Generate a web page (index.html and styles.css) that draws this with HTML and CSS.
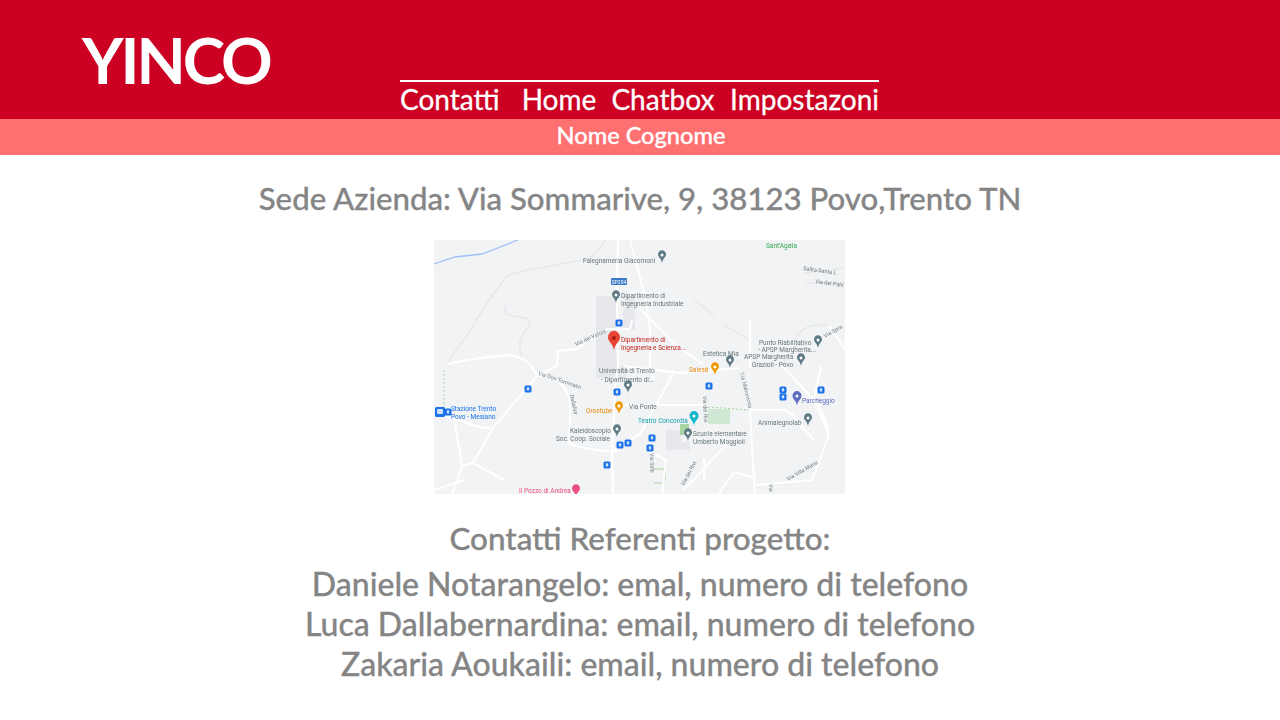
FILE: index.html
```html
<!DOCTYPE html>
<html>
<head>
<meta charset="UTF-8">
<title>YINCO - Contatti</title>
<link rel="stylesheet" href="styles.css">
</head>
<body>
  <header class="top">
    <div class="logo">YINCO</div>
    <nav class="menu">
      <a class="menu-contatti">Contatti</a>
      <a class="menu-home">Home</a>
      <a class="menu-chatbox">Chatbox</a>
      <a>Impostazoni</a>
    </nav>
  </header>
  <div class="user">Nome Cognome</div>
  <main class="content">
    <h1 class="address">Sede Azienda: Via Sommarive, 9, 38123 Povo,Trento TN</h1>
    <svg class="map" width="411" height="254" viewBox="0 0 411 254">
      <defs>
        <path id="pin" d="M0 5C-1-1-5-2-5-5.500A5 5.500 0 0 1 5-5.500C5-2 1-1 0 5Z"/>
        <g id="stop">
          <rect x="-3.500" y="-3.500" width="7" height="7" rx="1.500" fill="#1a73e8"/>
          <rect x="-1.200" y="-1.800" width="2.400" height="3.200" rx=".6" fill="#cfe0fb"/>
        </g>
      </defs>
      <rect width="411" height="254" fill="#f1f3f4"/>
      <!-- buildings and parks -->
      <rect x="162" y="56" width="21" height="70" fill="#e6e8eb"/>
      <rect x="189" y="56" width="12" height="34" fill="#e6e8eb"/>
      <rect x="162" y="126" width="30" height="12" fill="#e6e8eb"/>
      <path d="M232 190h16v12h8v8h-24Z" fill="#e6e8eb"/>
      <rect x="274" y="169" width="22" height="15" fill="#cfe8d4"/>
      <rect x="246" y="184" width="9" height="11" fill="#a8d5a2"/>
      <path d="M219 229h12v10q0 4-4 4h-7" fill="none" stroke="#a8d5a2"/>
      <path d="M274 167l42 3" stroke="#a8d5a2" stroke-dasharray="2 2" fill="none"/>
      <path d="M10 130v42" stroke="#a8d5a2" stroke-dasharray="2 2" fill="none"/>
      <path d="M0 24L21 17L48 14L84 0" fill="none" stroke="#9fc2f5" stroke-width="1.300"/>
      <!-- faint roads -->
      <g class="road-thin">
        <path d="M13 126Q22 108 33 96Q52 62 73 36Q88 30 106 28L153 19Q165 12 171 0"/>
        <path d="M71 66V72Q72 75 80 76L94 79Q98 82 92 90Q84 100 86 108L88 119"/>
        <path d="M370 33L410 28M372 43H410"/>
        <path d="M260 60L280 75M290 85L316 100"/>
        <path d="M360 100Q370 82 395 85M350 126Q352 105 370 105"/>
      </g>
      <!-- roads -->
      <g class="road">
        <path d="M184 0Q182 60 184 126L181 149L178 213L179 254"/>
        <path d="M196 0L212 60L216 90M216 90V130L220 140"/>
        <path d="M123 126L124 111L143 109L173 89L196 89L198 80"/>
        <path d="M13 124Q40 118 73 115Q88 116 96 124L103 136L123 126"/>
        <path d="M206 69L243 106L269 124"/>
        <path d="M190 126L246 133L306 128"/>
        <path d="M9 176L36 184Q50 189 59 188L103 136Q118 137 126 143Q134 150 136 163V189Q133 198 136 204Q150 209 173 211H186"/>
        <path d="M59 188L39 223L28 226L21 183"/>
        <path d="M28 226L18 254M39 223L70 240M0 250L30 240"/>
        <path d="M239 134L206 194L180 210"/>
        <path d="M188 165H270"/>
        <path d="M308 133L316 169L319 226L321 254"/>
        <path d="M316 80V128M316 170H350Q358 172 362 180L380 200"/>
        <path d="M348 126L385 165L395 190M387 126L380 160L395 195L378 240L322 245"/>
        <path d="M395 85L411 110M270 195H290L292 205L250 250M322 238L300 232L285 254"/>
        <path d="M216 212L232 220L228 254M270 218V240"/>
      </g>
      <!-- map labels -->
      <g class="label">
        <text class="green" x="332" y="8">Sant'Agata</text>
        <text x="149" y="23">Falegnameria Giacomoni</text>
        <text x="187" y="58">Dipartimento di</text>
        <text x="187" y="66">Ingegneria Industriale</text>
        <text class="red" x="187" y="102">Dipartimento di</text>
        <text class="red" x="187" y="110">Ingegneria e Scienza...</text>
        <text x="325" y="105">Punto Riabilitativo</text>
        <text x="324" y="112">- APSP Margherita...</text>
        <text x="310" y="119">APSP Margherita</text>
        <text x="318" y="127">Grazioli - Povo</text>
        <text x="269" y="116">Estetica Mia</text>
        <text class="orange" x="255" y="132">Salesà</text>
        <text x="165" y="133">Università di Trento</text>
        <text x="167" y="142">- Dipartimento di...</text>
        <text class="orange" x="152" y="173">Orostube</text>
        <text x="195" y="169">Via Ponte</text>
        <text class="blue" x="17" y="171">Stazione Trento</text>
        <text class="blue" x="17" y="179">Povo - Mesiano</text>
        <text x="136" y="193">Kaleidoscopio</text>
        <text x="122" y="201">Soc. Coop. Sociale</text>
        <text class="teal" x="204" y="183">Teatro Concordia</text>
        <text x="259" y="196">Scuola elementare</text>
        <text x="259" y="204">Umberto Moggioli</text>
        <text class="purple" x="368" y="163">Parcheggio</text>
        <text x="324" y="185">Animalegnolab</text>
        <text class="pink" x="85" y="253">Il Pozzo di Andrea</text>
        <text class="small" transform="translate(142 106) rotate(-24)">Via dei Valoni</text>
        <text class="small" transform="translate(369 30) rotate(8)">Salita Santa L</text>
        <text class="small" transform="translate(381 43) rotate(8)">Via dei Pahl</text>
        <text class="small" transform="translate(391 98) rotate(-30)">Via Spra</text>
        <text class="small" transform="translate(354 241) rotate(-30)">Via Villa Maria</text>
        <text class="small" transform="translate(104 135) rotate(18)">Via Don Tommaso</text>
        <text class="small" transform="translate(136 155) rotate(78)">Dallafior</text>
        <text class="small" transform="translate(269 156) rotate(88)">Via dei Rivi</text>
        <text class="small" transform="translate(250 246) rotate(-62)">Via dei Rivi</text>
        <text class="small" transform="translate(216 213) rotate(88)">Via Sale</text>
        <text class="small" transform="translate(306 133) rotate(76)">Via Mahoniosa</text>
        <text class="small" transform="translate(335 244) rotate(88)">Via</text>
      </g>
      <!-- sp badge -->
      <rect x="177" y="38" width="16" height="7" rx="1" fill="#3b78c9"/>
      <text class="badge" x="185" y="43.500" text-anchor="middle">SP204</text>
      <!-- pins -->
      <g fill="#5f7a85">
        <use href="#pin" transform="translate(228 19) scale(.8)"/>
        <use href="#pin" transform="translate(182 59) scale(.8)"/>
        <use href="#pin" transform="translate(384 104) scale(.8)"/>
        <use href="#pin" transform="translate(367 122) scale(.8)"/>
        <use href="#pin" transform="translate(296 124) scale(.8)"/>
        <use href="#pin" transform="translate(194 149) scale(.8)"/>
        <use href="#pin" transform="translate(183 193) scale(.8)"/>
        <use href="#pin" transform="translate(254 197) scale(.8)"/>
        <use href="#pin" transform="translate(374 182) scale(.8)"/>
      </g>
      <g fill="#ea4335"><use href="#pin" transform="translate(180 104) scale(1.200)"/></g>
      <circle cx="180" cy="98" r="2" fill="#a61c14"/>
      <g fill="#f29900">
        <use href="#pin" transform="translate(281 131) scale(.8)"/>
        <use href="#pin" transform="translate(185 170) scale(.8)"/>
      </g>
      <g fill="#12b5cb"><use href="#pin" transform="translate(260 181) scale(.9)"/></g>
      <g fill="#5c6bc0"><use href="#pin" transform="translate(363 161) scale(.9)"/></g>
      <g fill="#ec4f82"><use href="#pin" transform="translate(142 253) scale(.8)"/></g>
      <g fill="#fff">
        <circle cx="228" cy="15" r="1.500"/><circle cx="182" cy="55" r="1.500"/>
        <circle cx="384" cy="100" r="1.500"/><circle cx="367" cy="118" r="1.500"/>
        <circle cx="296" cy="120" r="1.500"/><circle cx="194" cy="145" r="1.500"/>
        <circle cx="183" cy="189" r="1.500"/><circle cx="254" cy="193" r="1.500"/>
        <circle cx="374" cy="178" r="1.500"/><circle cx="281" cy="127" r="1.500"/>
        <circle cx="185" cy="166" r="1.500"/><circle cx="260" cy="176" r="1.500"/>
        <circle cx="363" cy="156" r="1.500"/>
      </g>
      <!-- transit stops -->
      <rect x="1" y="167" width="10" height="10" rx="1.500" fill="#1a73e8"/>
      <rect x="3" y="169" width="6" height="5" rx="1" fill="#cfe0fb"/>
      <use href="#stop" x="14" y="172"/>
      <use href="#stop" x="185" y="83"/>
      <use href="#stop" x="94" y="149"/>
      <use href="#stop" x="183" y="152"/>
      <use href="#stop" x="186" y="205"/>
      <use href="#stop" x="194" y="203"/>
      <use href="#stop" x="173" y="225"/>
      <use href="#stop" x="275" y="146"/>
      <use href="#stop" x="349" y="150"/>
      <use href="#stop" x="349" y="157"/>
      <use href="#stop" x="387" y="150"/>
      <use href="#stop" x="218" y="198"/>
      <use href="#stop" x="216" y="208"/>
    </svg>
    <h2 class="refs-title">Contatti Referenti progetto:</h2>
    <p class="ref">Daniele Notarangelo: emal, numero di telefono</p>
    <p class="ref">Luca Dallabernardina: email, numero di telefono</p>
    <p class="ref">Zakaria Aoukaili: email, numero di telefono</p>
  </main>
</body>
</html>
```

FILE: styles.css
```css
/* General Styles */
body {
    margin: 0;
    background-color: #ffffff;
    font-family: "Lato", "Open Sans", sans-serif;
    color: #858585;
    -webkit-text-stroke: 0.3px;
}

/* Header */
.top {
    display: flex;
    height: 119px;
    background-color: #cc0022;
    color: #ffffff;
}

.logo {
    width: 318px;
    padding: 21px 0 0 82px;
    font-size: 64px;
    line-height: 78px;
    font-weight: 700;
    letter-spacing: -3px;
    -webkit-text-stroke: 0;
}

.menu {
    display: flex;
    align-self: flex-end;
    width: 479px;
    height: 37px;
    border-top: 2px solid #ffffff;
    font-size: 28px;
    line-height: 35px;
    white-space: nowrap;
}

.menu-contatti {
    width: 122px;
}

.menu-home {
    width: 90px;
}

.menu-chatbox {
    width: 119px;
}

.user {
    height: 36px;
    padding-left: 2px;
    background-color: #ff7070;
    color: #ffffff;
    font-size: 23.6px;
    line-height: 33px;
    font-weight: 500;
    text-align: center;
}

/* Content */
.content {
    display: flex;
    flex-direction: column;
    align-items: center;
}

.address {
    margin: 23px 0 0;
    font-size: 31.2px;
    line-height: 40px;
    font-weight: 500;
}

.map {
    display: block;
    margin: 22px 0 0 -1px;
    filter: blur(0.35px);
    -webkit-text-stroke: 0;
}

.refs-title {
    margin: 24px 0 0;
    font-size: 31.4px;
    line-height: 40px;
    font-weight: 500;
}

.ref {
    margin: 0;
    font-size: 32px;
    line-height: 40px;
    font-weight: 500;
}

.ref:first-of-type {
    margin-top: 6px;
}

/* Map */
.road path {
    fill: none;
    stroke: #ffffff;
    stroke-width: 2;
    stroke-linejoin: round;
}

.road-thin path {
    fill: none;
    stroke: #e6e8ea;
    stroke-width: 1.5;
    stroke-linejoin: round;
}

.label text {
    font-family: "Roboto", sans-serif;
    font-size: 6.5px;
    fill: #66757c;
}

.label .small {
    font-size: 5.5px;
    fill: #6f7a80;
}

.label .green {
    fill: #34a853;
}

.label .red {
    fill: #c5221f;
}

.label .orange {
    fill: #e8890c;
}

.label .blue {
    fill: #1a73e8;
}

.label .teal {
    fill: #129eaf;
}

.label .purple {
    fill: #5c6bc0;
}

.label .pink {
    fill: #ec4f82;
}

.badge {
    font-family: "Roboto", sans-serif;
    font-size: 5px;
    fill: #ffffff;
}
```
